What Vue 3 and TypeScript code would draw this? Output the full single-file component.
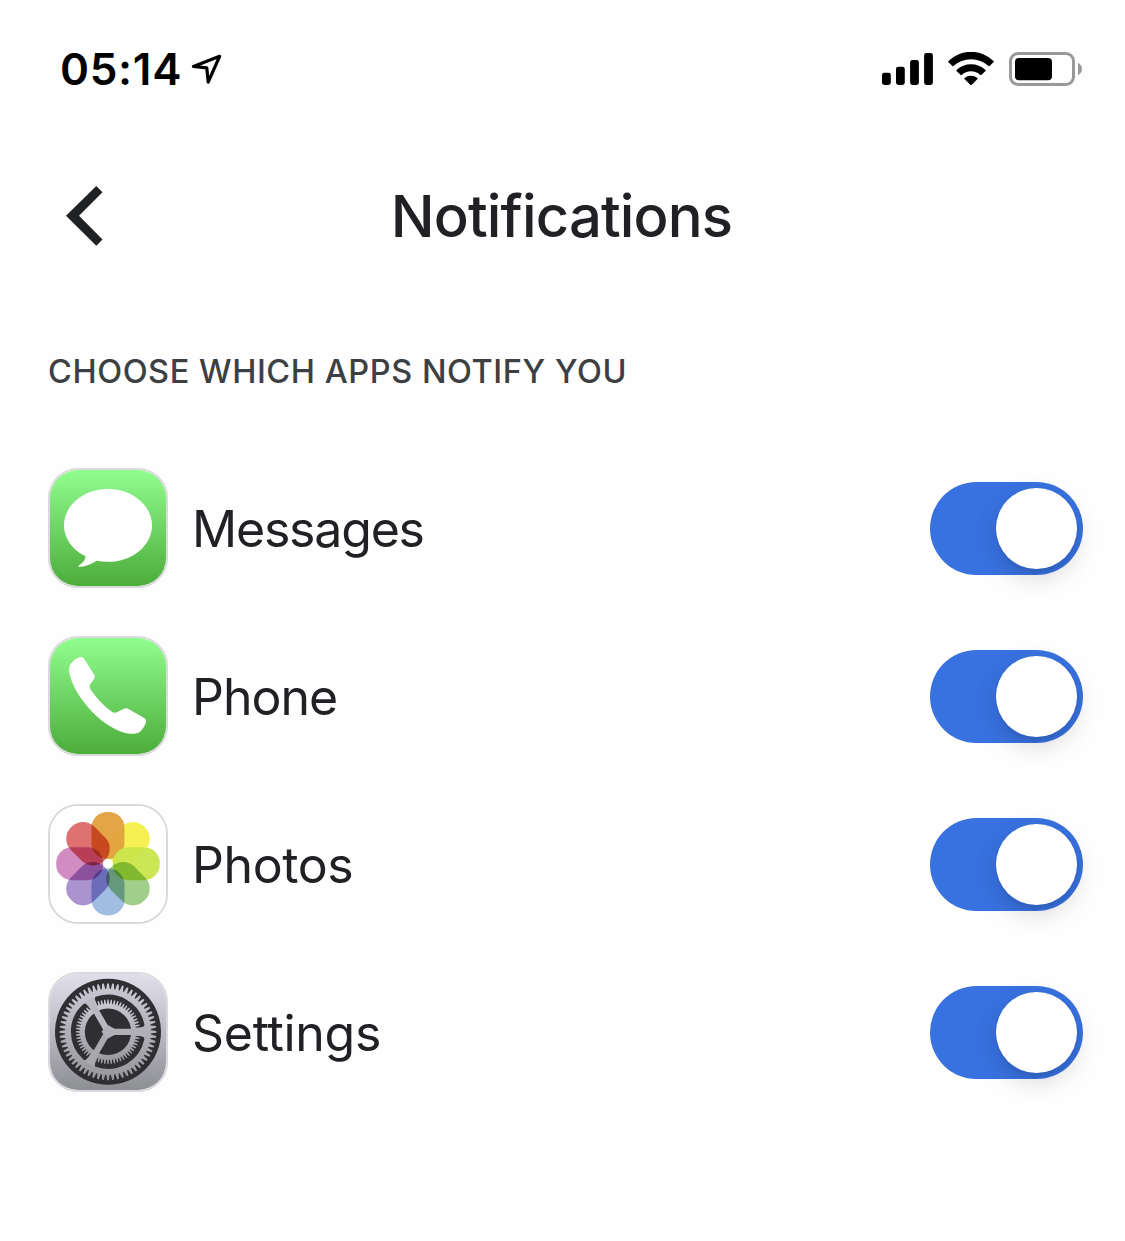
<template>
  <div class="screen">
    <header class="status-bar">
      <div class="status-left">
        <span class="time">05:14</span>
        <svg class="location" width="34" height="34" viewBox="0 0 34 34">
          <path d="M29.6 4.3L3.4 14.4L16.8 15.9L18.2 30.1Z" />
        </svg>
      </div>
      <div class="status-right">
        <svg width="51" height="34" viewBox="0 0 51 34">
          <rect x="0" y="20.7" width="8.8" height="12.3" rx="2.4" />
          <rect x="14" y="14.7" width="8.8" height="18.3" rx="2.4" />
          <rect x="28.1" y="8" width="8.8" height="25" rx="2.4" />
          <rect x="42.1" y="1" width="8.8" height="32" rx="2.4" />
        </svg>
        <svg width="46" height="34" viewBox="0 0 46 34">
          <path d="M0.3 9.9Q0 9.4 0.4 9A32.4 32.4 0 0 1 45.6 9Q46 9.4 45.7 9.9L41.6 14Q41.1 14.4 40.6 14A26 26 0 0 0 5.4 14Q4.9 14.4 4.4 14Z" />
          <path d="M8.5 17.9A21.4 21.4 0 0 1 37.5 17.9Q38 18.4 37.5 18.9L33.3 22.9Q32.8 23.3 32.3 22.9A14 14 0 0 0 13.7 22.9Q13.2 23.3 12.7 22.9L8.5 18.9Q8 18.4 8.5 17.9Z" />
          <path d="M16.5 26A10.4 10.4 0 0 1 29.5 26Q30 26.5 29.5 27L23.5 32.9Q23 33.3 22.5 32.9L16.5 27Q16 26.5 16.5 26Z" />
        </svg>
        <svg width="74" height="34" viewBox="0 0 74 34">
          <rect class="battery-shell" x="1.5" y="1.5" width="63" height="31" rx="7.5" />
          <rect x="6" y="6" width="37" height="22.2" rx="4" />
          <path class="battery-cap" d="M69 10.8Q73 13 73 17T69 23.2Z" />
        </svg>
      </div>
    </header>

    <nav class="nav-bar">
      <button class="back" type="button" aria-label="Back">
        <svg width="37" height="60" viewBox="0 0 37 60">
          <path d="M30.3 0L36.5 6.2L13 29.8L36.5 53.4L30.3 59.8L0 29.8Z" />
        </svg>
      </button>
      <h1 class="title">Notifications</h1>
    </nav>

    <h2 class="section-title">CHOOSE WHICH APPS NOTIFY YOU</h2>

    <ul class="app-list">
      <li v-for="app in apps" :key="app.id" class="app-row">
        <div class="app-icon">
          <svg v-if="app.id === 'messages'" viewBox="0 0 120 120">
            <rect width="120" height="120" fill="url(#green)" />
            <path
              fill="#fff"
              d="M60 21C84.3 21 104 37.3 104 57.4S84.3 93.8 60 93.8C56 93.8 52.2 93.4 48.6 92.7C43 96.2 37 98.9 31 98.8C29.8 98.7 30 98 31.2 97.2C35 94.6 37.2 92.3 37.6 88.3C24.5 81.8 16 70.4 16 57.4C16 37.3 35.7 21 60 21Z"
            />
          </svg>

          <svg v-else-if="app.id === 'phone'" viewBox="0 0 120 120">
            <rect width="120" height="120" fill="url(#green)" />
            <path
              fill="#fff"
              d="M31.3 21.2C33.5 20.5 35 21.1 36.4 23.2L46.1 38.6C47 40.3 46.9 41.7 45.9 43.2L42.4 48C41.3 49.6 41.4 51.2 42.6 53.2C47.6 61.4 55.5 69.6 63.6 75.4C65.6 76.8 67.3 77 69.2 76L75.4 73C77.2 72.2 78.7 72.1 80.5 73L95.8 81.8C98 83.2 98.6 84.8 97.8 86.9C96.3 90.6 94.3 93.5 91.7 96C90 97.5 86 98 82 97.7C58 95.5 26 62.5 21.1 35.8C20.8 32.6 21.3 30.1 22.6 28.1C24.8 25 27.6 22.6 31.3 21.2Z"
            />
          </svg>

          <svg v-else-if="app.id === 'photos'" viewBox="0 0 120 120">
            <rect width="120" height="120" fill="#fff" />
            <rect
              v-for="petal in petals"
              :key="petal.angle"
              class="petal"
              :class="{ flat: petal.flat }"
              x="43.5"
              y="7.9"
              width="33"
              height="47"
              rx="15.8"
              :fill="petal.color"
              :transform="`rotate(${petal.angle} 60 59.7)`"
            />
          </svg>

          <svg v-else viewBox="0 0 120 120">
            <rect width="120" height="120" fill="url(#silver)" />
            <g transform="translate(60 59.8)">
              <circle r="53" fill="#2f2e33" />
              <path :d="outerGear" fill="url(#metal)" />
              <path v-for="d in slots" :key="d" :d="d" class="slot" />
              <path :d="innerGear" fill="url(#metal)" />
              <circle r="23.2" fill="#2f2e33" />
              <path
                v-for="spoke in spokes"
                :key="spoke.angle"
                d="M0 -3.1L28 -3.1Q32.5 -3.1 35 -5L37 -5L37 5L35 5Q32.5 3.1 28 3.1L0 3.1Z"
                :fill="spoke.color"
                :transform="`rotate(${spoke.angle})`"
              />
              <path d="M6.5 -3.1L-0.5 -7L-6.5 0L-0.5 7L6.5 3.1Z" fill="#b1b0b7" />
            </g>
          </svg>
        </div>
        <span class="app-name" :class="app.id">{{ app.name }}</span>
        <button
          class="toggle"
          :class="{ on: app.enabled }"
          type="button"
          role="switch"
          :aria-checked="app.enabled"
          :aria-label="app.name"
          @click="app.enabled = !app.enabled"
        >
          <span class="knob"></span>
        </button>
      </li>
    </ul>

    <!-- shared gradients for the app icons -->
    <svg class="defs" width="0" height="0">
      <defs>
        <linearGradient id="green" x1="0" y1="0" x2="0" y2="1">
          <stop offset="0" stop-color="#92ff90" />
          <stop offset="1" stop-color="#4bab38" />
        </linearGradient>
        <linearGradient id="silver" x1="0" y1="0" x2="0" y2="1">
          <stop offset="0" stop-color="#e2dfeb" />
          <stop offset="0.5" stop-color="#bbbac2" />
          <stop offset="1" stop-color="#8b8d91" />
        </linearGradient>
        <linearGradient id="metal" x1="0" y1="0" x2="0" y2="1">
          <stop offset="0" stop-color="#cbc8d3" />
          <stop offset="1" stop-color="#96979b" />
        </linearGradient>
      </defs>
    </svg>
  </div>
</template>

<script setup lang="ts">
import { ref } from 'vue'

interface AppItem {
  id: string
  name: string
  enabled: boolean
}

interface Petal {
  angle: number
  color: string
  flat?: boolean
}

const apps = ref<AppItem[]>([
  { id: 'messages', name: 'Messages', enabled: true },
  { id: 'phone', name: 'Phone', enabled: true },
  { id: 'photos', name: 'Photos', enabled: true },
  { id: 'settings', name: 'Settings', enabled: true }
])

// flat petals are painted over the yellow one, the rest multiply
const petals: Petal[] = [
  { angle: 45, color: '#f6f04a', flat: true },
  { angle: 0, color: '#e2a03c', flat: true },
  { angle: 90, color: '#cae54c', flat: true },
  { angle: 135, color: '#a1cf8b' },
  { angle: 180, color: '#a1bde2' },
  { angle: 225, color: '#ab93d0' },
  { angle: 270, color: '#d18cc1' },
  { angle: 315, color: '#df7171' }
]

const spokes = [
  { angle: 0, color: '#b1b0b7' },
  { angle: 120, color: '#a8a8ad' },
  { angle: 240, color: '#bab8c1' }
]

const polar = (radius: number, degrees: number): string => {
  const a = (degrees * Math.PI) / 180
  return `${(radius * Math.cos(a)).toFixed(2)} ${(radius * Math.sin(a)).toFixed(2)}`
}

const gear = (teeth: number, root: number, tip: number): string => {
  const step = 360 / teeth
  const points: string[] = []
  for (let i = 0; i < teeth; i++) {
    const a = i * step
    points.push(
      polar(root, a - step * 0.38),
      polar(tip, a - step * 0.17),
      polar(tip, a + step * 0.17),
      polar(root, a + step * 0.38)
    )
  }
  return `M${points.join('L')}Z`
}

const outerGear = gear(60, 43, 48.4)
const innerGear = gear(60, 28, 32.2)

// three dark slots between the spokes
const slots = [0, 120, 240].map((start) => {
  const a = start + 12
  const b = start + 108
  return `M${polar(34.6, a)}A34.6 34.6 0 0 1 ${polar(34.6, b)}L${polar(27, b - 1)}A27 27 0 0 0 ${polar(27, a + 1)}Z`
})
</script>

<style>
body {
  margin: 0;
  background: #fefefe;
}
</style>

<style scoped>
.screen {
  box-sizing: border-box;
  width: 1125px;
  height: 1241px;
  padding: 52px 42px 0 48px;
  overflow: hidden;
  background: #fefefe;
  color: #202124;
  font-family: Inter, "Liberation Sans", sans-serif;
}

.status-bar {
  display: flex;
  justify-content: space-between;
  height: 34px;
  color: #000;
}

.status-left,
.status-right {
  display: flex;
  align-items: center;
}

.status-left {
  padding-left: 12px;
}

.time {
  width: 130px;
  font-size: 44px;
  font-weight: 600;
  line-height: 34px;
  letter-spacing: 0.7px;
  white-space: nowrap;
}

.location {
  fill: none;
  stroke: #000;
  stroke-width: 3.2;
  stroke-linejoin: round;
}

.status-right {
  gap: 15px;
}

.battery-shell {
  fill: none;
  stroke: #999;
  stroke-width: 3;
}

.battery-cap {
  fill: #999;
}

.nav-bar {
  display: grid;
  grid-template-columns: 60px 1fr 68px;
  align-items: center;
  height: 60px;
  margin-top: 100px;
}

.back {
  height: 60px;
  padding: 0 0 0 18px;
  border: 0;
  background: none;
  text-align: left;
}

.back svg {
  display: block;
  fill: #202124;
}

.title {
  margin: 0;
  font-size: 58px;
  font-weight: 500;
  line-height: 60px;
  letter-spacing: -0.85px;
  text-align: center;
}

.section-title {
  margin: 106px 0 0;
  color: #3c4043;
  font-size: 32.5px;
  font-weight: 450;
  line-height: 40px;
  letter-spacing: 0.56px;
  white-space: nowrap;
}

.app-list {
  display: flex;
  flex-direction: column;
  gap: 48px;
  margin: 76px 0 0;
  padding: 0;
  list-style: none;
}

.app-row {
  display: flex;
  align-items: center;
  height: 120px;
}

.app-icon {
  display: grid;
  box-sizing: border-box;
  width: 120px;
  height: 120px;
  border: 2px solid #d9d9de;
  border-radius: 30px;
  overflow: hidden;
}

.app-icon svg {
  display: block;
  width: 120px;
  height: 120px;
  margin: -2px;
  isolation: isolate;
}

.petal {
  mix-blend-mode: multiply;
}

.petal.flat {
  mix-blend-mode: normal;
  opacity: 0.95;
}

.slot {
  fill: #2f2e33;
  stroke: #2f2e33;
  stroke-width: 5;
  stroke-linejoin: round;
}

.app-name {
  flex: 1;
  padding: 2px 0 0 24px;
  font-size: 50px;
  font-weight: 400;
  line-height: 60px;
  letter-spacing: -0.8px;
}

.app-name.messages {
  letter-spacing: -1.2px;
}

.app-name.phone {
  letter-spacing: -1px;
}

.app-name.photos {
  letter-spacing: -0.4px;
}

.app-name.settings {
  letter-spacing: -0.3px;
}

.toggle {
  display: flex;
  align-items: center;
  box-sizing: border-box;
  width: 153px;
  height: 93px;
  margin-top: 1px;
  padding: 6px;
  border: 0;
  border-radius: 47px;
  background: #dadce0;
}

.toggle.on {
  justify-content: flex-end;
  background: #3871e0;
}

.knob {
  width: 81px;
  height: 81px;
  border-radius: 50%;
  background: #fff;
  box-shadow: 0 9px 24px rgba(0, 0, 0, 0.15), 0 3px 3px rgba(0, 0, 0, 0.06);
}

.defs {
  position: absolute;
}
</style>
